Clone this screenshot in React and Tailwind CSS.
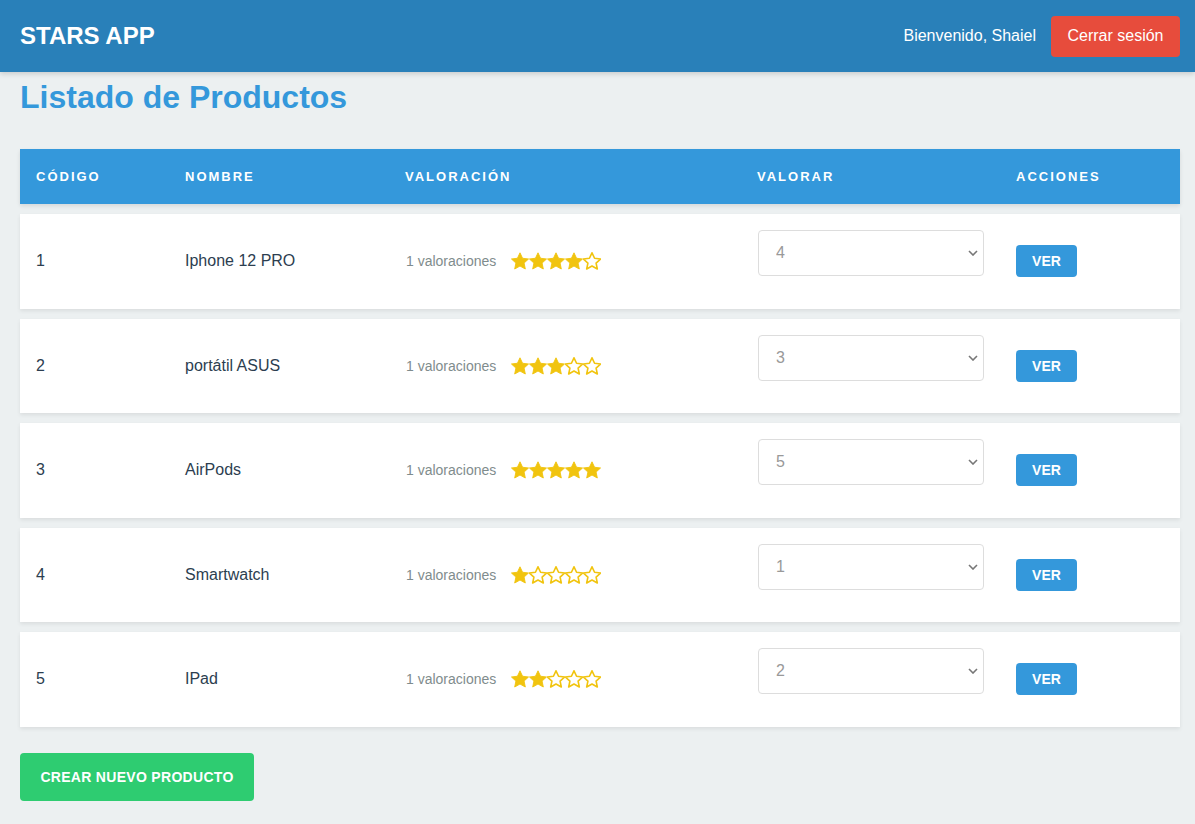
import { useState } from 'react'

const products = [
  { id: 1, name: 'Iphone 12 PRO', rating: 4 },
  { id: 2, name: 'portátil ASUS', rating: 3 },
  { id: 3, name: 'AirPods', rating: 5 },
  { id: 4, name: 'Smartwatch', rating: 1 },
  { id: 5, name: 'IPad', rating: 2 },
]

const cols = 'grid grid-cols-[149px_220px_352px_259px_1fr] items-center pl-4'

function Star({ filled }) {
  return (
    <svg width="18" height="18" viewBox="2 2 20 20" className="shrink-0">
      <path
        d="M12 2.9l2.85 6.05 6.65.8-4.95 4.55 1.35 6.6L12 17.6l-5.9 3.3 1.35-6.6L2.5 9.75l6.65-.8z"
        fill={filled ? '#f1c40f' : 'none'}
        stroke="#f1c40f"
        strokeWidth={filled ? 1 : 1.8}
        strokeLinejoin="round"
      />
    </svg>
  )
}

function Stars({ value }) {
  return (
    <div className="flex items-center">
      {[1, 2, 3, 4, 5].map((n) => (
        <Star key={n} filled={n <= value} />
      ))}
    </div>
  )
}

function Row({ product }) {
  const [value, setValue] = useState(product.rating)
  return (
    <div className={`${cols} h-[94.5px] bg-white shadow-[0_2px_4px_rgba(0,0,0,0.08)]`}>
      <div className="text-base text-[#2c3e50]">{product.id}</div>
      <div className="text-base text-[#2c3e50]">{product.name}</div>
      <div className="flex items-center gap-[15px] pl-px">
        <span className="text-sm text-[#7f8c8d]">1 valoraciones</span>
        <Stars value={product.rating} />
      </div>
      <div className="relative -mt-4 w-[227px] pl-px">
        <select
          value={value}
          onChange={(e) => setValue(Number(e.target.value))}
          className="h-[46px] w-full appearance-none rounded border border-[#dddddd] bg-white pl-[17px] text-base text-[#999999] outline-none"
        >
          {[1, 2, 3, 4, 5].map((n) => (
            <option key={n} value={n}>
              {n}
            </option>
          ))}
        </select>
        <svg
          width="10"
          height="6"
          viewBox="0 0 10 6"
          className="pointer-events-none absolute right-[6px] top-[20px]"
        >
          <path d="M1 1l4 4 4-4" fill="none" stroke="#777" strokeWidth="1.6" />
        </svg>
      </div>
      <div>
        <button className="h-8 w-[61px] rounded bg-[#3498db] text-sm font-bold text-white">
          VER
        </button>
      </div>
    </div>
  )
}

export default function App() {
  return (
    <div className="min-h-screen bg-[#ecf0f1] font-['Liberation_Sans',Arial,sans-serif]">
      <header className="flex h-[72px] items-center justify-between bg-[#2980b9] pl-5 pr-[15px] shadow-[0_2px_5px_rgba(0,0,0,0.15)]">
        <h1 className="text-2xl font-bold text-white">STARS APP</h1>
        <div className="flex items-center gap-[15px]">
          <span className="text-base text-white">Bienvenido, Shaiel</span>
          <button className="h-[41px] w-[129px] rounded bg-[#e74c3c] text-base text-white">
            Cerrar sesión
          </button>
        </div>
      </header>

      <main className="pl-5 pr-[15px] pt-[6px]">
        <h2 className="text-[32px] leading-[38px] font-bold text-[#3498db]">Listado de Productos</h2>

        <div className="mt-[33px] flex flex-col gap-[10px]">
          <div
            className={`${cols} h-[55px] bg-[#3498db] text-[13px] font-bold tracking-[2px] text-white shadow-[0_2px_4px_rgba(0,0,0,0.1)]`}
          >
            <div>CÓDIGO</div>
            <div>NOMBRE</div>
            <div>VALORACIÓN</div>
            <div>VALORAR</div>
            <div>ACCIONES</div>
          </div>
          {products.map((p) => (
            <Row key={p.id} product={p} />
          ))}
        </div>

        <button className="mt-[26px] h-12 w-[234px] rounded bg-[#2ecc71] text-sm font-bold tracking-[0.3px] text-white">
          CREAR NUEVO PRODUCTO
        </button>
      </main>
    </div>
  )
}
